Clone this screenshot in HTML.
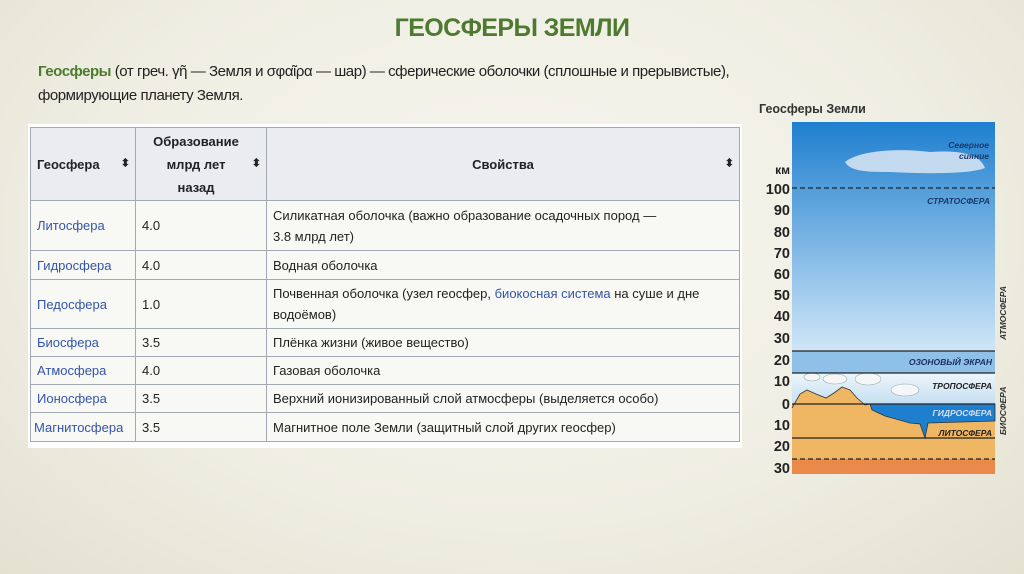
<!DOCTYPE html>
<html><head><meta charset="utf-8"><style>
*{margin:0;padding:0;box-sizing:border-box}
body{width:1024px;height:574px;overflow:hidden;position:relative;font-family:"Liberation Sans",sans-serif;background:radial-gradient(ellipse at 50% 40%,#f7f6ef 0%,#efeee3 60%,#e3e1d0 100%)}
h1{position:absolute;top:14px;left:0;width:1024px;text-align:center;font-size:25px;font-weight:bold;color:#4d7a2e;letter-spacing:-0.6px}
.intro{position:absolute;left:38px;top:60px;font-size:15px;letter-spacing:-0.45px;line-height:24px;color:#222;width:760px;white-space:nowrap}
.intro b{color:#4d7a2e}
.tw{position:absolute;left:28px;top:124px;width:714px;height:324px;background:#fff;padding:3px 2px}
table{border-collapse:collapse;width:710px;font-size:13px;color:#222;background:#f8f8f4}
td,th{border:1px solid #a2a9b1;padding:0 6px;vertical-align:middle;text-align:left}
th{background:#eaecf0;font-weight:bold;position:relative;line-height:23px;text-align:center}
th:after{content:"⬍";position:absolute;right:5px;top:50%;transform:translateY(-50%);font-size:11px}
td{line-height:21px}
td a{color:#3355aa}
.c1{width:105px}.c2{width:131px}
</style></head><body>
<h1>ГЕОСФЕРЫ ЗЕМЛИ</h1>
<div class="intro"><b>Геосферы</b> (от греч. γῆ — Земля и σφαῖρα — шар) — сферические оболочки (сплошные и прерывистые),<br>формирующие планету Земля.</div>
<div class="tw"><table>
<tr style="height:73px"><th class="c1" style="text-align:left;padding-left:6px">Геосфера</th><th class="c2" style="padding-right:16px">Образование<br>млрд лет<br>назад</th><th>Свойства</th></tr>
<tr style="height:50px"><td><a>Литосфера</a></td><td>4.0</td><td>Силикатная оболочка (важно образование осадочных пород —<br>3.8 млрд лет)</td></tr>
<tr style="height:29px"><td><a>Гидросфера</a></td><td>4.0</td><td>Водная оболочка</td></tr>
<tr style="height:49px"><td><a>Педосфера</a></td><td>1.0</td><td>Почвенная оболочка (узел геосфер, <a>биокосная система</a> на суше и дне<br>водоёмов)</td></tr>
<tr style="height:28px"><td><a>Биосфера</a></td><td>3.5</td><td>Плёнка жизни (живое вещество)</td></tr>
<tr style="height:28px"><td><a>Атмосфера</a></td><td>4.0</td><td>Газовая оболочка</td></tr>
<tr style="height:28px"><td><a>Ионосфера</a></td><td>3.5</td><td>Верхний ионизированный слой атмосферы (выделяется особо)</td></tr>
<tr style="height:29px"><td style="padding:0 3px"><a>Магнитосфера</a></td><td>3.5</td><td>Магнитное поле Земли (защитный слой других геосфер)</td></tr>
</table></div>
<svg style="position:absolute;left:750px;top:90px" width="274" height="390" font-family="Liberation Sans" font-weight="bold">
<defs><linearGradient id="sk" x1="0" y1="0" x2="0" y2="1"><stop offset="0" stop-color="#1f7fcf"/><stop offset="1" stop-color="#cfe6f7"/></linearGradient>
<linearGradient id="tr" x1="0" y1="0" x2="0" y2="1"><stop offset="0" stop-color="#eef6fc"/><stop offset="1" stop-color="#bfdcf0"/></linearGradient></defs>
<text x="9" y="23" font-size="12.5" fill="#333">Геосферы Земли</text>
<rect x="42" y="32" width="203" height="229" fill="url(#sk)"/>
<rect x="42" y="261" width="203" height="22" fill="#8fc0e8"/>
<rect x="42" y="283" width="203" height="35" fill="url(#tr)"/>
<rect x="42" y="314" width="203" height="70" fill="#efb763"/>
<rect x="42" y="369" width="203" height="15" fill="#e98a4a"/>
<path d="M42 318 L50 304 L57 300 L66 304 L76 308 L84 303 L92 297 L100 300 L107 308 L115 315 L122 320 L135 326 L160 333 L170 334 L175 348 L178 334 L245 331 L245 314 L42 314Z" fill="#efb763"/>
<path d="M120 314 L245 314 L245 331 L178 333 L175 348 L170 334 L160 333 L135 326 L122 320Z" fill="#1f7fcf" stroke="#333" stroke-width="0.8"/>
<path d="M42 318 L50 304 L57 300 L66 304 L76 308 L84 303 L92 297 L100 300 L107 308 L115 315 L120 314" fill="none" stroke="#333" stroke-width="0.8"/>
<g fill="#f4f6f8" stroke="#9aa" stroke-width="0.6"><ellipse cx="62" cy="287" rx="8" ry="4"/><ellipse cx="85" cy="289" rx="12" ry="5"/><ellipse cx="118" cy="289" rx="13" ry="6"/><ellipse cx="155" cy="300" rx="14" ry="6"/></g>
<path d="M95 72 C110 60,150 58,180 62 C210 60,230 64,235 78 C220 84,180 84,140 82 C120 82,100 82,95 72Z" fill="#dbe6f3" opacity="0.85"/>
<g stroke="#222" stroke-width="1.3"><line x1="42" y1="98" x2="245" y2="98" stroke-dasharray="5,3"/><line x1="42" y1="261" x2="245" y2="261"/><line x1="42" y1="283" x2="245" y2="283"/><line x1="42" y1="314" x2="245" y2="314"/><line x1="42" y1="348" x2="245" y2="348"/><line x1="42" y1="369" x2="245" y2="369" stroke-dasharray="5,3"/></g>
<g font-style="italic" fill="#1a3a6a" font-size="8.5" text-anchor="end"><text x="239" y="58">Северное</text><text x="239" y="69">сияние</text><text x="240" y="114">СТРАТОСФЕРА</text><text x="242" y="275" fill="#1a3060">ОЗОНОВЫЙ ЭКРАН</text><text x="242" y="299" fill="#222">ТРОПОСФЕРА</text><text x="242" y="326" fill="#dde">ГИДРОСФЕРА</text><text x="242" y="346" fill="#222">ЛИТОСФЕРА</text></g>
<g font-size="8.5" font-style="italic" fill="#333"><text transform="translate(256,250) rotate(-90)">АТМОСФЕРА</text><text transform="translate(256,345) rotate(-90)">БИОСФЕРА</text></g>
<g font-size="14.5" fill="#222" text-anchor="end"><text x="40" y="84" font-size="12">км</text><text x="40" y="104">100</text><text x="40" y="125">90</text><text x="40" y="147">80</text><text x="40" y="168">70</text><text x="40" y="189">60</text><text x="40" y="210">50</text><text x="40" y="231">40</text><text x="40" y="253">30</text><text x="40" y="275">20</text><text x="40" y="296">10</text><text x="40" y="319">0</text><text x="40" y="340">10</text><text x="40" y="361">20</text><text x="40" y="383">30</text></g>
</svg>
</body></html>
